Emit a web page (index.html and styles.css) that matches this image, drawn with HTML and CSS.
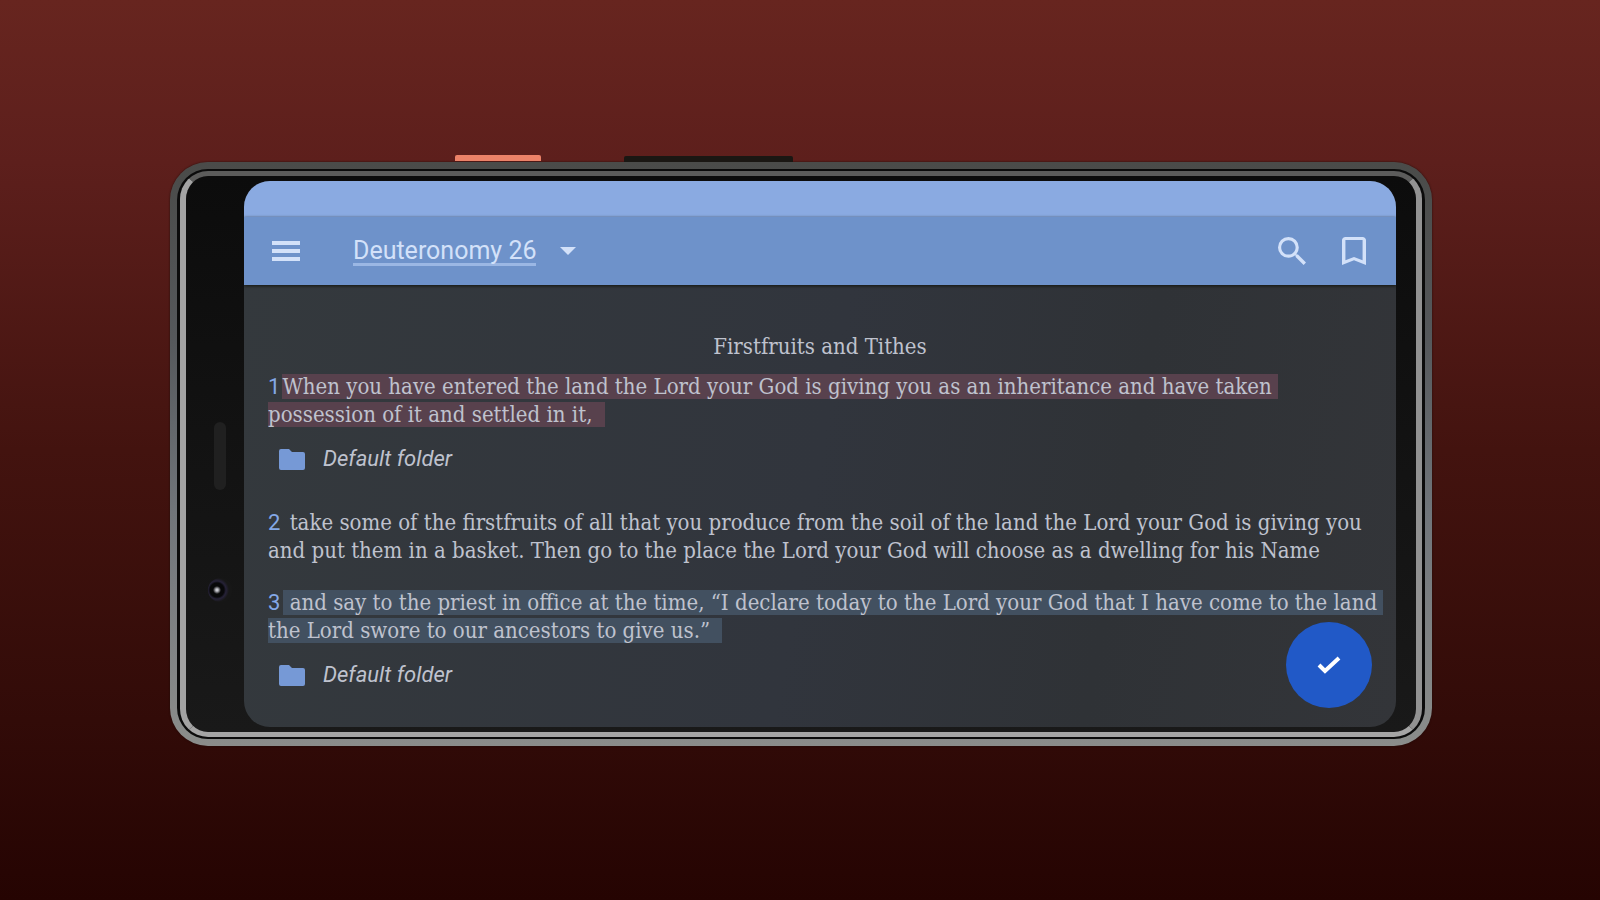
FILE: index.html
```html
<!DOCTYPE html>
<html lang="en">
<head>
    <meta charset="UTF-8">
    <meta name="viewport" content="width=device-width, initial-scale=1.0">
    <title>Deuteronomy 26</title>
    <link rel="stylesheet" href="styles.css">
</head>
<body>
    <div class="phone">
        <span class="side-button power"></span>
        <span class="side-button volume"></span>
        <div class="rim">
            <div class="glass">
                <div class="sensors">
                    <span class="speaker"></span>
                    <span class="camera"></span>
                </div>

                <div class="screen">
                    <div class="status-bar"></div>
                    <header class="toolbar">
                        <button type="button" class="icon-button" aria-label="Menu">
                            <svg width="28" height="20" viewBox="0 0 28 20" fill="currentColor">
                                <path d="M0 0h28v4H0zM0 8h28v4H0zM0 16h28v4H0z"/>
                            </svg>
                        </button>
                        <button type="button" class="chapter">
                            <span class="chapter-name">Deuteronomy 26</span>
                            <svg width="16" height="8" viewBox="0 0 16 8" fill="currentColor">
                                <path d="M0 0h16L8 8z"/>
                            </svg>
                        </button>
                        <button type="button" class="icon-button search" aria-label="Search">
                            <svg width="28" height="28" viewBox="3 3 17.5 17.5" fill="currentColor">
                                <path d="M15.5 14h-.79l-.28-.27A6.47 6.47 0 0 0 16 9.5 6.5 6.5 0 1 0 9.5 16c1.61 0 3.09-.59 4.23-1.57l.27.28v.79l5 4.99L20.49 19l-4.99-5zm-6 0C7.01 14 5 11.99 5 9.5S7.01 5 9.5 5 14 7.01 14 9.5 11.99 14 9.5 14z"/>
                            </svg>
                        </button>
                        <button type="button" class="icon-button" aria-label="Bookmark">
                            <svg width="24" height="28" viewBox="5 3 14 18" preserveAspectRatio="none" fill="currentColor">
                                <path d="M17 3H7c-1.100 0-2 .9-2 2v16l7-3 7 3V5c0-1.100-.9-2-2-2zm0 15-5-2.180L7 18V5h10v13z"/>
                            </svg>
                        </button>
                    </header>

                    <main class="content">
                        <h1>Firstfruits and Tithes</h1>

                        <p class="verse pink"><b class="first">1</b><span>When you have entered the land the Lord your God is giving you as an inheritance and have taken<br>possession of it and settled in it,&nbsp;</span></p>
                        <a href="#" class="folder">
                            <svg width="26" height="21" viewBox="0 0 26 21" fill="currentColor">
                                <path d="M2 0h8l3 3h11a2 2 0 0 1 2 2v14a2 2 0 0 1-2 2H2a2 2 0 0 1-2-2V2a2 2 0 0 1 2-2z"/>
                            </svg>
                            Default folder
                        </a>

                        <p class="verse"><b>2</b><span>&nbsp;take some of the firstfruits of all that you produce from the soil of the land the Lord your God is giving you<br>and put them in a basket. Then go to the place the Lord your God will choose as a dwelling for his Name</span></p>

                        <p class="verse blue"><b>3</b><span>&nbsp;and say to the priest in office at the time, “I declare today to the Lord your God that I have come to the land<br>the Lord swore to our ancestors to give us.”&nbsp;</span></p>
                        <a href="#" class="folder">
                            <svg width="26" height="21" viewBox="0 0 26 21" fill="currentColor">
                                <path d="M2 0h8l3 3h11a2 2 0 0 1 2 2v14a2 2 0 0 1-2 2H2a2 2 0 0 1-2-2V2a2 2 0 0 1 2-2z"/>
                            </svg>
                            Default folder
                        </a>
                    </main>

                    <button type="button" class="fab" aria-label="Done">
                        <svg width="24" height="20" viewBox="0 0 24 20" fill="none" stroke="currentColor" stroke-width="4">
                            <path d="M2 10l6 6L22 3"/>
                        </svg>
                    </button>
                </div>
            </div>
        </div>
    </div>
</body>
</html>
```
FILE: styles.css
```css
* {
    box-sizing: border-box;
}
body {
    margin: 0;
    min-height: 100vh;
    padding: 8px 168px 0 170px;
    display: flex;
    align-items: center;
    background: linear-gradient(#67251f, #5d1f1c 18%, #43130f 50%, #320b08 80%, #250402);
    font-family: Roboto, sans-serif;
}
button {
    padding: 0;
    border: none;
    background: none;
    color: inherit;
    font: inherit;
    cursor: pointer;
}
svg {
    display: block;
    flex: none;
}

/* Phone body */
.phone {
    position: relative;
    width: 100%;
    padding: 7px;
    border-radius: 38px;
    background: linear-gradient(#4a4b49, #55585b 30%, #70757a 60%, #8b8d8b);
    box-shadow: 0 0 2px #1c0c0a;
}
.side-button {
    position: absolute;
    border-radius: 2px 2px 0 0;
}
.power {
    top: -7px;
    left: 285px;
    width: 86px;
    height: 6px;
    background: #ec8268;
}
.volume {
    top: -6px;
    left: 454px;
    width: 169px;
    height: 6px;
    background: #1a1713;
}
.rim {
    padding: 2px 3px;
    border-radius: 31px;
    background: #0b0b0b;
}
.glass {
    display: flex;
    padding: 5px 20px 5px 0;
    border: 5px solid;
    border-color: #5c5c5b #929292 #a5a5a5 #a3a3a3;
    border-width: 5px 6px;
    border-radius: 28px;
    background: linear-gradient(#0c0c0c, #191919);
}
.sensors {
    flex: none;
    width: 58px;
    display: flex;
    flex-direction: column;
    align-items: center;
    justify-content: center;
    gap: 88px;
    padding: 116px 0 0 10px;
}
.speaker {
    width: 12px;
    height: 68px;
    border-radius: 6px;
    background: #202020;
}
.camera {
    width: 24px;
    height: 24px;
    border-radius: 50%;
    background: radial-gradient(circle at 9px 12px, #c8c8d0 1px, #08080a 4px, #08080a 7px, #262238 9px, #171717 12px);
}

/* App */
.screen {
    position: relative;
    flex: 1;
    min-width: 0;
    overflow: hidden;
    border-radius: 26px;
    background: linear-gradient(100deg, #34393d, #31353d 50%, #2f3236 75%, #333539);
    color: #bfc2ce;
}
.status-bar {
    height: 36px;
    background: #8aaae1;
}
.toolbar {
    display: flex;
    align-items: center;
    height: 68px;
    padding: 0 30px 0 28px;
    background: #6e92ca;
    box-shadow: 0 1px 3px #14160f;
    color: #d3e1f9;
}
.chapter {
    display: flex;
    align-items: center;
    gap: 24px;
    margin-left: 53px;
    font-size: 25px;
    line-height: 28px;
}
.chapter-name {
    padding-top: 3px;
    border-bottom: 3px solid #9bb7e4;
    line-height: 24px;
}
.search {
    margin-left: auto;
    margin-right: 36px;
}
.content {
    padding: 48px 24px 38px;
    font-family: "DejaVu Serif Condensed", "DejaVu Serif", serif;
    font-size: 22px;
    line-height: 28px;
}
h1 {
    margin: 0 0 12px;
    font-size: 22px;
    font-weight: normal;
    text-align: center;
}
.verse {
    margin: 0 0 24px;
    white-space: nowrap;
}
.verse b {
    margin-right: 3px;
    color: #84a8e6;
    font-family: Roboto, sans-serif;
    font-weight: normal;
}
.verse .first {
    margin-right: 2px;
}
.verse span {
    padding-right: 6px;
    -webkit-box-decoration-break: clone;
    box-decoration-break: clone;
}
.pink span {
    background: #58414d;
}
.blue span {
    background: #425060;
}
.folder {
    display: flex;
    align-items: center;
    gap: 18px;
    width: max-content;
    margin: -8px 0 36px 11px;
    color: #bfc2ce;
    font-family: Roboto, sans-serif;
    font-style: italic;
    text-decoration: none;
}
.folder:last-child {
    margin-bottom: 0;
}
.folder svg {
    color: #7699d6;
}
.fab {
    position: absolute;
    right: 24px;
    bottom: 19px;
    display: flex;
    align-items: center;
    justify-content: center;
    width: 86px;
    height: 86px;
    border-radius: 50%;
    background: #2159c7;
    color: #fff;
}
```
